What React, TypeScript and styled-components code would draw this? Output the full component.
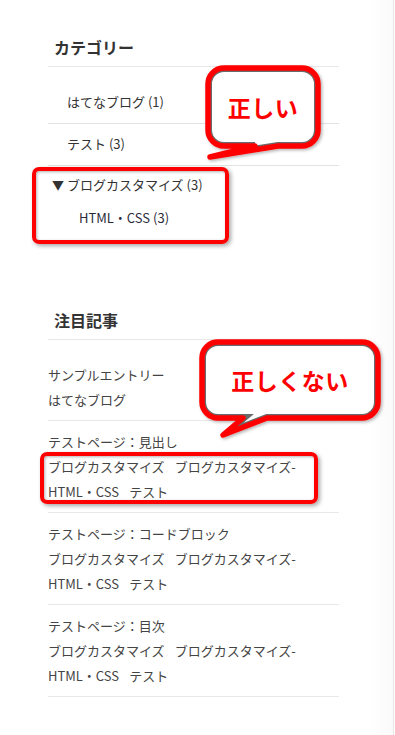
import React from 'react';
import styled, { createGlobalStyle } from 'styled-components';

const GlobalStyle = createGlobalStyle`
    html, body {
        margin: 0;
        padding: 0;
        background: #fff;
    }
    body {
        font-family: 'Noto Sans CJK JP', 'Noto Sans', sans-serif;
        color: #444;
        font-size: 13px;
    }
    * {
        box-sizing: border-box;
    }
`;

const categories = [
    { name: 'はてなブログ', count: 1 },
    { name: 'テスト', count: 3 },
];

const entries = [
    { title: 'サンプルエントリー', cats: ['はてなブログ'] },
    { title: 'テストページ：見出し', cats: ['ブログカスタマイズ', 'ブログカスタマイズ-HTML・CSS', 'テスト'] },
    { title: 'テストページ：コードブロック', cats: ['ブログカスタマイズ', 'ブログカスタマイズ-HTML・CSS', 'テスト'] },
    { title: 'テストページ：目次', cats: ['ブログカスタマイズ', 'ブログカスタマイズ-HTML・CSS', 'テスト'] },
];

type Bubble = {
    left: number;
    top: number;
    width: number;
    height: number;
    body: { x: number; y: number; w: number; h: number };
    tail: { a: number; b: number; px: number; py: number };
    label: string;
};

const bubbles: Bubble[] = [
    {
        left: 200,
        top: 60,
        width: 126,
        height: 104,
        body: { x: 8, y: 8, w: 110, h: 78 },
        tail: { a: 55, b: 78, px: 10, py: 97 },
        label: '正しい',
    },
    {
        left: 194,
        top: 336,
        width: 194,
        height: 106,
        body: { x: 8, y: 6, w: 176, h: 76 },
        tail: { a: 49, b: 73, px: 29, py: 99 },
        label: '正しくない',
    },
];

const bubblePath = ({ body, tail }: Bubble) => {
    const r = 16;
    const { x, y, w, h } = body;
    const x2 = x + w;
    const y2 = y + h;
    return [
        `M ${x + r} ${y}`,
        `H ${x2 - r}`,
        `A ${r} ${r} 0 0 1 ${x2} ${y + r}`,
        `V ${y2 - r}`,
        `A ${r} ${r} 0 0 1 ${x2 - r} ${y2}`,
        `H ${tail.b}`,
        `L ${tail.px} ${tail.py}`,
        `L ${tail.a} ${y2}`,
        `H ${x + r}`,
        `A ${r} ${r} 0 0 1 ${x} ${y2 - r}`,
        `V ${y + r}`,
        `A ${r} ${r} 0 0 1 ${x + r} ${y}`,
        'Z',
    ].join(' ');
};

const SpeechBubble = ({ bubble, id }: { bubble: Bubble; id: string }) => {
    const d = bubblePath(bubble);
    const { body } = bubble;
    return (
        <BubbleBox style={{ left: bubble.left, top: bubble.top, width: bubble.width, height: bubble.height }}>
            <svg width={bubble.width} height={bubble.height} viewBox={`0 0 ${bubble.width} ${bubble.height}`}>
                <defs>
                    <clipPath id={`clip-${id}`}>
                        <path d={d} />
                    </clipPath>
                    <filter id={`shadow-${id}`} x="-10%" y="-10%" width="130%" height="130%">
                        <feDropShadow dx="1.5" dy="1.5" stdDeviation="1.5" floodColor="#000" floodOpacity="0.3" />
                    </filter>
                </defs>
                <g filter={`url(#shadow-${id})`}>
                    <path d={d} fill="#fff" />
                    <path d={d} fill="none" stroke="#6a6a6a" strokeWidth="8" clipPath={`url(#clip-${id})`} />
                    <path d={d} fill="none" stroke="#ff0000" strokeWidth="5.5" strokeLinejoin="round" />
                </g>
            </svg>
            <BubbleLabel style={{ left: body.x, top: body.y, width: body.w, height: body.h }}>{bubble.label}</BubbleLabel>
        </BubbleBox>
    );
};

const App = () => {
    return (
        <>
            <GlobalStyle />
            <Page>
                <Sidebar>
                    <Section>
                        <Heading>カテゴリー</Heading>
                        <CategoryList>
                            {categories.map((c) => (
                                <CategoryItem key={c.name}>
                                    {c.name} ({c.count})
                                </CategoryItem>
                            ))}
                            <ParentItem>
                                <Arrow>▼</Arrow>ブログカスタマイズ (3)
                                <ChildItem>HTML・CSS (3)</ChildItem>
                            </ParentItem>
                        </CategoryList>
                    </Section>

                    <Section $gap={80}>
                        <Heading>注目記事</Heading>
                        <EntryList>
                            {entries.map((e) => (
                                <EntryItem key={e.title}>
                                    <EntryTitle>{e.title}</EntryTitle>
                                    <EntryCats>
                                        {e.cats.map((cat) => (
                                            <CatLink key={cat}>{cat}</CatLink>
                                        ))}
                                    </EntryCats>
                                </EntryItem>
                            ))}
                        </EntryList>
                    </Section>
                </Sidebar>

                <Highlight style={{ left: 32, top: 167, width: 197, height: 77 }} />
                <Highlight style={{ left: 40, top: 452, width: 278, height: 52 }} />
                {bubbles.map((b, i) => (
                    <SpeechBubble key={b.label} bubble={b} id={`b${i}`} />
                ))}
            </Page>
        </>
    );
};

export default App;

const Page = styled.div`
    position: relative;
    width: 394px;
    min-height: 735px;
    border-right: 1px solid #e6e6e6;
    background: linear-gradient(to right, #fff 0, #fff 368px, #fafafa 393px);
    overflow: hidden;
`;

const Sidebar = styled.aside`
    width: 339px;
    padding: 35px 0 40px 48px;
`;

const Section = styled.section<{ $gap?: number }>`
    margin-top: ${(p) => p.$gap ?? 0}px;
`;

const Heading = styled.h3`
    margin: 0;
    padding: 0 0 7px 6px;
    font-size: 16px;
    line-height: 24px;
    font-weight: 700;
    color: #333;
    border-bottom: 1px solid #e8e8e8;
`;

const CategoryList = styled.ul`
    list-style: none;
    margin: 15px 0 0;
    padding: 0;
`;

const CategoryItem = styled.li`
    padding: 10px 0 11px 19px;
    line-height: 20px;
    color: #333;
    border-bottom: 1px solid #e3e3e3;
`;

const ParentItem = styled.li`
    padding: 9px 0 0 4px;
    line-height: 20px;
    color: #333;
`;

const Arrow = styled.span`
    display: inline-block;
    width: 15px;
    font-size: 12px;
`;

const ChildItem = styled.div`
    margin-top: 13px;
    padding-left: 27px;
    line-height: 20px;
    color: #2a2a3a;
`;

const EntryList = styled.ul`
    list-style: none;
    margin: 14px 0 0;
    padding: 0;
`;

const EntryItem = styled.li`
    padding: 8px 0 8px;
    line-height: 25px;
    border-bottom: 1px solid #e8e8e8;
`;

const EntryTitle = styled.div`
    color: #444;
`;

const EntryCats = styled.div`
    color: #444;
`;

const CatLink = styled.span`
    margin-right: 10px;
`;

const Highlight = styled.div`
    position: absolute;
    border: 4px solid #ff0000;
    border-radius: 7px;
    box-shadow: 2px 2px 4px rgba(0, 0, 0, 0.35), inset 1px 1px 3px rgba(0, 0, 0, 0.3);
    pointer-events: none;
`;

const BubbleBox = styled.div`
    position: absolute;
    pointer-events: none;

    svg {
        display: block;
    }
`;

const BubbleLabel = styled.div`
    position: absolute;
    display: flex;
    align-items: center;
    justify-content: center;
    color: #ff0000;
    font-size: 23px;
    font-weight: 700;
    letter-spacing: 0.5px;
`;
